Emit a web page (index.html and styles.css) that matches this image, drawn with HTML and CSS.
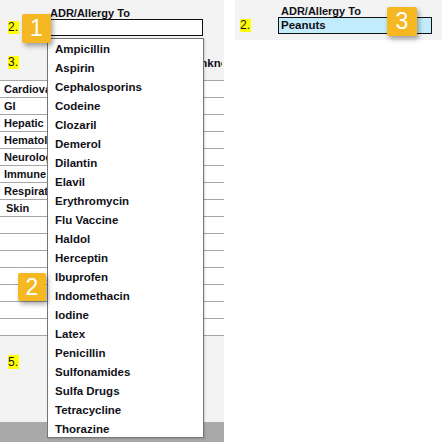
FILE: index.html
```html
<!DOCTYPE html>
<html>
<head>
<meta charset="utf-8">
<link rel="stylesheet" href="styles.css">
</head>
<body>
<div class="page">
  <div class="left">
    <div class="head">
      <div class="label-row"><span class="label">ADR/Allergy To</span></div>
      <div class="field-row">
        <span class="num">2.</span>
        <div class="input"></div>
      </div>
      <div class="row3">
        <span class="num">3.</span>
        <span class="unk">Unknown</span>
      </div>
    </div>
    <div class="table">
      <div class="tr"><span class="cell">Cardiovascular</span></div>
      <div class="tr"><span class="cell">GI</span></div>
      <div class="tr"><span class="cell">Hepatic</span></div>
      <div class="tr"><span class="cell">Hematologic</span></div>
      <div class="tr"><span class="cell">Neurologic</span></div>
      <div class="tr"><span class="cell">Immune</span></div>
      <div class="tr"><span class="cell">Respiratory</span></div>
      <div class="tr indent"><span class="cell">Skin</span></div>
      <div class="tr"></div>
      <div class="tr"></div>
      <div class="tr"></div>
      <div class="tr"></div>
      <div class="tr"></div>
      <div class="tr"></div>
      <div class="tr"></div>
    </div>
    <div class="foot">
      <span class="num">5.</span>
    </div>
    <div class="bottom-band"></div>

    <ul class="dropdown">
      <li>Ampicillin</li>
      <li>Aspirin</li>
      <li>Cephalosporins</li>
      <li>Codeine</li>
      <li>Clozaril</li>
      <li>Demerol</li>
      <li>Dilantin</li>
      <li>Elavil</li>
      <li>Erythromycin</li>
      <li>Flu Vaccine</li>
      <li>Haldol</li>
      <li>Herceptin</li>
      <li>Ibuprofen</li>
      <li>Indomethacin</li>
      <li>Iodine</li>
      <li>Latex</li>
      <li>Penicillin</li>
      <li>Sulfonamides</li>
      <li>Sulfa Drugs</li>
      <li>Tetracycline</li>
      <li>Thorazine</li>
    </ul>
    <div class="badge b1">1</div>
    <div class="badge b2">2</div>
  </div>
  <div class="right">
    <div class="strip">
      <div class="label-row r"><span class="label">ADR/Allergy To</span></div>
      <div class="field-row r">
        <span class="num">2.</span>
        <div class="input filled">Peanuts</div>
      </div>
      <div class="badge b3">3</div>
    </div>
  </div>
</div>
</body>
</html>
```

FILE: styles.css
```css
html, body {
  margin: 0;
  padding: 0;
  background: #ffffff;
}
body {
  font-family: "Liberation Sans", Arial, sans-serif;
  color: #111118;
}
.page {
  display: flex;
  width: 442px;
  height: 442px;
  overflow: hidden;
}
.left {
  position: relative;
  width: 224px;
  height: 442px;
  background: #f3f3f3;
  overflow: hidden;
  display: flex;
  flex-direction: column;
}
.head {
  height: 80px;
  box-sizing: border-box;
  padding-top: 5px;
}
.label-row {
  padding-left: 50px;
  height: 14px;
  line-height: 14px;
}
.label {
  font-weight: bold;
  font-size: 11px;
}
.field-row {
  display: flex;
  align-items: center;
  padding-left: 8px;
}
.num {
  font-size: 12px;
  line-height: 13px;
  background: #ffff00;
  padding: 0 1px 0 0;
}
.input {
  margin-left: 30px;
  width: 154px;
  height: 17px;
  box-sizing: border-box;
  border: 1px solid #111;
  background: #ffffff;
}
.row3 {
  display: flex;
  align-items: center;
  padding-left: 8px;
  margin-top: 20px;
  height: 13px;
}
.unk {
  font-weight: bold;
  font-size: 11.5px;
  margin-left: 173px;
  white-space: nowrap;
  width: 30px;
  overflow: hidden;
  flex: none;
}
.table {
  background: #ffffff;
}
.tr {
  height: 17px;
  box-sizing: border-box;
  border-top: 1px solid #a6a6a6;
  font-weight: bold;
  font-size: 11px;
  line-height: 16px;
  padding-left: 4px;
  white-space: nowrap;
}
.tr.indent {
  padding-left: 6px;
}
.cell {
  display: inline-block;
  max-width: 43px;
  overflow: hidden;
  vertical-align: top;
}
.foot {
  flex: 1;
  padding-left: 8px;
  padding-top: 16px;
  border-top: 1px solid #a6a6a6;
}
.bottom-band {
  height: 20px;
  background: #a9a9a9;
}
.dropdown {
  position: absolute;
  left: 47px;
  top: 38px;
  width: 157px;
  height: 400px;
  box-sizing: border-box;
  margin: 0;
  padding: 1px 0 0 0;
  list-style: none;
  background: #ffffff;
  border: 1px solid #767676;
  box-shadow: 1px 1px 2px rgba(0,0,0,0.15);
}
.dropdown li {
  height: 19px;
  line-height: 19px;
  padding-left: 7px;
  font-weight: bold;
  font-size: 11.5px;
  white-space: nowrap;
}
.badge {
  position: absolute;
  background: #f5b822;
  color: #ffffff;
  font-family: "Liberation Sans", Arial, sans-serif;
  font-size: 23px;
  display: flex;
  align-items: center;
  justify-content: center;
  border-radius: 2px;
  box-shadow: 2px 3px 5px rgba(0,0,0,0.35);
}
.b1 { left: 22px; top: 14px; width: 29px; height: 29px; }
.b2 { left: 18px; top: 273px; width: 28px; height: 28px; }
.right {
  flex: 1;
  background: #ffffff;
  padding-left: 11px;
}
.strip {
  position: relative;
  height: 40px;
  background: #f3f3f3;
  box-sizing: border-box;
  padding-top: 3px;
}
.label-row.r {
  padding-left: 46px;
}
.field-row.r {
  padding-left: 5px;
}
.input.filled {
  margin-left: 27px;
  background: #c2ecfb;
  font-weight: bold;
  font-size: 11.5px;
  line-height: 15px;
  padding-left: 2px;
}
.b3 { left: 152px; top: 7px; width: 30px; height: 29px; }
```
